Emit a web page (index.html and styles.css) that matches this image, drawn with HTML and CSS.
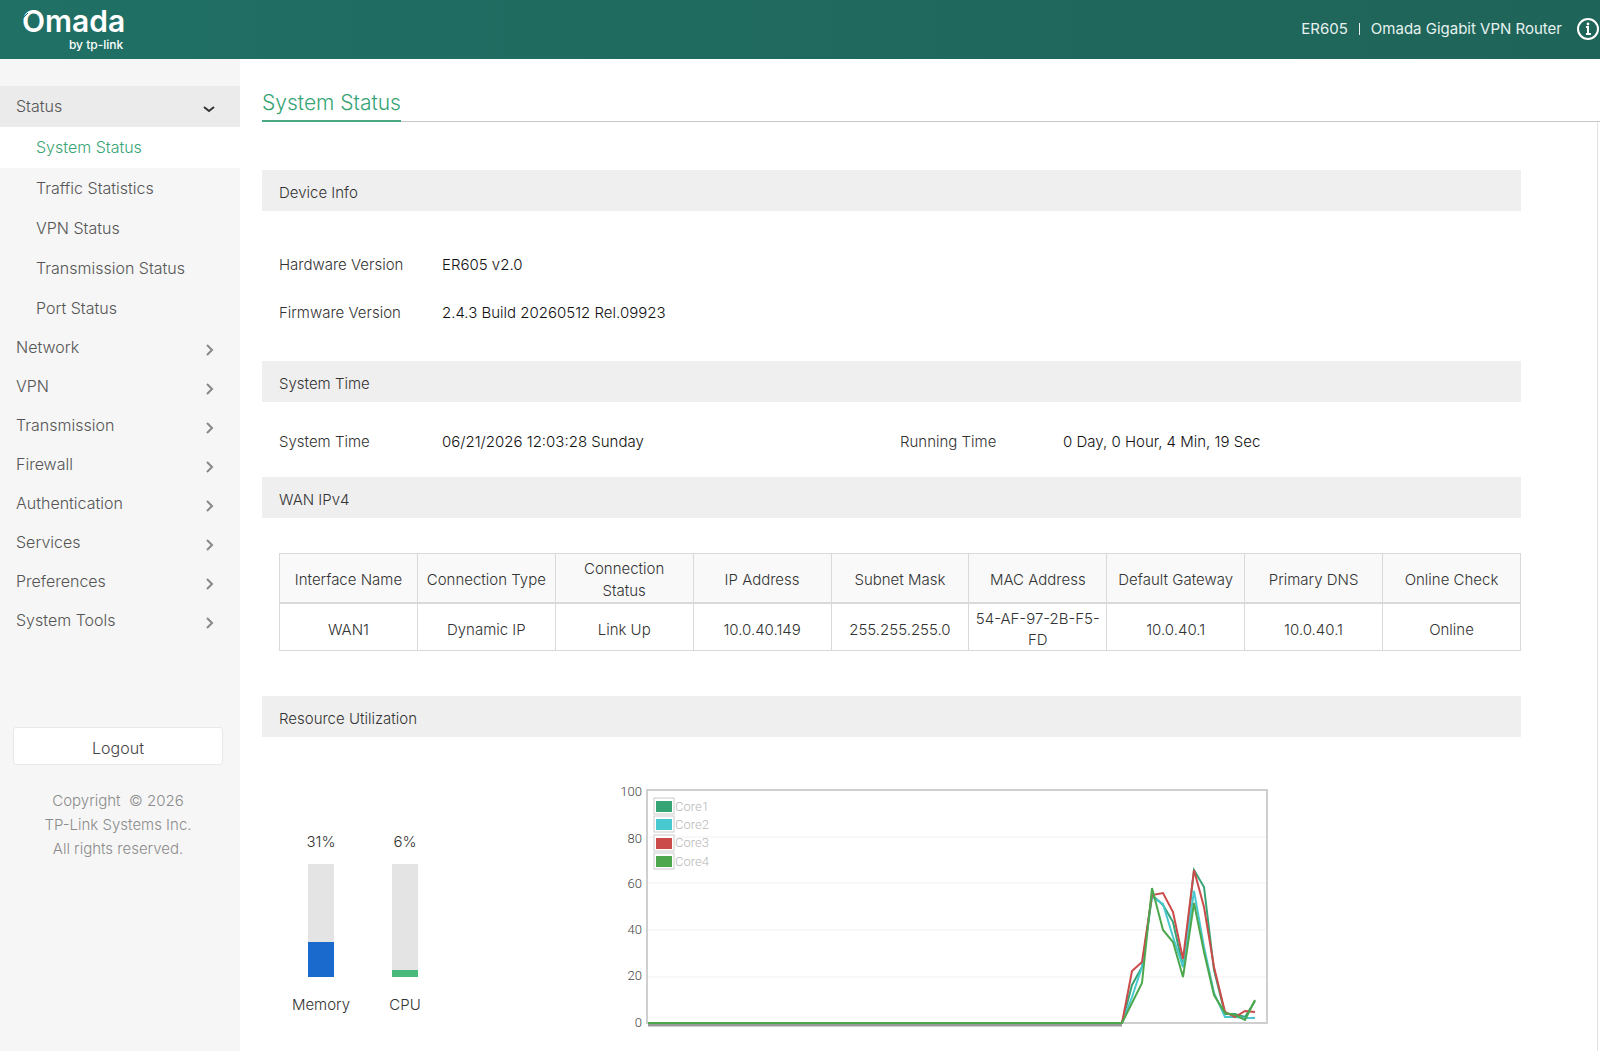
FILE: index.html
```html
<!DOCTYPE html>
<html lang="en">
<head>
  <meta charset="UTF-8" />
  <meta name="viewport" content="width=device-width,initial-scale=1.0" />
  <title>ER605 - System Status</title>
  <link rel="stylesheet" href="styles.css">
</head>
<body>
  <header class="topbar">
    <div class="logo">
      <span class="logo-name">Omada</span>
      <span class="logo-by">by tp-link</span>
      <svg class="logo-cut" width="8" height="10" viewBox="0 0 8 10"><path d="M0 8L6 2" /></svg>
    </div>
    <div class="device">
      <span>ER605</span>
      <span class="divider"></span>
      <span>Omada Gigabit VPN Router</span>
      <button type="button" class="info" aria-label="About">
        <svg width="24" height="24" viewBox="0 0 24 24">
          <circle cx="12" cy="12" r="10" fill="none" stroke="currentColor" stroke-width="2" />
          <path d="M10 10h2v7M10 17h5" fill="none" stroke="currentColor" stroke-width="2" />
          <circle cx="12" cy="7" r="1.4" fill="currentColor" />
        </svg>
      </button>
    </div>
  </header>

  <div class="layout">
    <aside class="sidebar">
      <nav>
        <a href="#status" class="item open">Status
          <svg width="12" height="12" viewBox="0 0 12 12"><path d="M1 4l5 4 5-4" /></svg>
        </a>
        <a href="#system-status" class="sub active">System Status</a>
        <a href="#traffic" class="sub">Traffic Statistics</a>
        <a href="#vpn-status" class="sub">VPN Status</a>
        <a href="#transmission-status" class="sub">Transmission Status</a>
        <a href="#port-status" class="sub">Port Status</a>
        <a href="#network" class="item">Network
          <svg width="12" height="12" viewBox="0 0 12 12"><path d="M4 1l5 5-5 5" /></svg>
        </a>
        <a href="#vpn" class="item">VPN
          <svg width="12" height="12" viewBox="0 0 12 12"><path d="M4 1l5 5-5 5" /></svg>
        </a>
        <a href="#transmission" class="item">Transmission
          <svg width="12" height="12" viewBox="0 0 12 12"><path d="M4 1l5 5-5 5" /></svg>
        </a>
        <a href="#firewall" class="item">Firewall
          <svg width="12" height="12" viewBox="0 0 12 12"><path d="M4 1l5 5-5 5" /></svg>
        </a>
        <a href="#authentication" class="item">Authentication
          <svg width="12" height="12" viewBox="0 0 12 12"><path d="M4 1l5 5-5 5" /></svg>
        </a>
        <a href="#services" class="item">Services
          <svg width="12" height="12" viewBox="0 0 12 12"><path d="M4 1l5 5-5 5" /></svg>
        </a>
        <a href="#preferences" class="item">Preferences
          <svg width="12" height="12" viewBox="0 0 12 12"><path d="M4 1l5 5-5 5" /></svg>
        </a>
        <a href="#system-tools" class="item">System Tools
          <svg width="12" height="12" viewBox="0 0 12 12"><path d="M4 1l5 5-5 5" /></svg>
        </a>
      </nav>
      <button type="button" class="logout">Logout</button>
      <p class="copyright">Copyright &nbsp;© 2026<br>TP-Link Systems Inc.<br>All rights reserved.</p>
    </aside>

    <main>
      <div class="tabs"><h1>System Status</h1></div>

      <div class="panel">
        <section>
          <h2>Device Info</h2>
          <dl class="info-list device-info">
            <div><dt>Hardware Version</dt><dd>ER605 v2.0</dd></div>
            <div><dt>Firmware Version</dt><dd>2.4.3 Build 20260512 Rel.09923</dd></div>
          </dl>
        </section>

        <section>
          <h2>System Time</h2>
          <dl class="info-list time-info">
            <div><dt>System Time</dt><dd>06/21/2026 12:03:28 Sunday</dd></div>
            <div><dt>Running Time</dt><dd>0 Day, 0 Hour, 4 Min, 19 Sec</dd></div>
          </dl>
        </section>

        <section>
          <h2>WAN IPv4</h2>
          <table>
            <thead>
              <tr>
                <th>Interface Name</th>
                <th>Connection Type</th>
                <th>Connection<br>Status</th>
                <th>IP Address</th>
                <th>Subnet Mask</th>
                <th>MAC Address</th>
                <th>Default Gateway</th>
                <th>Primary DNS</th>
                <th>Online Check</th>
              </tr>
            </thead>
            <tbody>
              <tr>
                <td>WAN1</td>
                <td>Dynamic IP</td>
                <td>Link Up</td>
                <td>10.0.40.149</td>
                <td>255.255.255.0</td>
                <td>54-AF-97-2B-F5-<br>FD</td>
                <td>10.0.40.1</td>
                <td>10.0.40.1</td>
                <td>Online</td>
              </tr>
            </tbody>
          </table>
        </section>

        <section>
          <h2>Resource Utilization</h2>
          <div class="resources">
            <div class="meter">
              <span>31%</span>
              <div class="track"><div class="fill memory" style="height:31%"></div></div>
              <span>Memory</span>
            </div>
            <div class="meter">
              <span>6%</span>
              <div class="track"><div class="fill cpu" style="height:6%"></div></div>
              <span>CPU</span>
            </div>

            <svg class="chart" width="660" height="250" viewBox="0 0 660 250" role="img" aria-label="CPU usage per core">
              <!-- grid -->
              <g class="grid">
                <path d="M38 57H656M38 103H656M38 150H656M38 197H656" />
              </g>
              <rect class="frame" x="37" y="10" width="620" height="233" />
              <g class="axis" text-anchor="end">
                <text x="32" y="16">100</text>
                <text x="32" y="63">80</text>
                <text x="32" y="108">60</text>
                <text x="32" y="154">40</text>
                <text x="32" y="200">20</text>
                <text x="32" y="247">0</text>
              </g>
              <!-- legend -->
              <g class="legend">
                <rect x="44" y="18" width="20" height="16" /><rect class="c1" x="46" y="21" width="16" height="11" /><text x="65" y="31">Core1</text>
                <rect x="44" y="36" width="20" height="16" /><rect class="c2" x="46" y="39" width="16" height="11" /><text x="65" y="49">Core2</text>
                <rect x="44" y="55" width="20" height="16" /><rect class="c3" x="46" y="58" width="16" height="11" /><text x="65" y="67">Core3</text>
                <rect x="44" y="73" width="20" height="16" /><rect class="c4" x="46" y="76" width="16" height="11" /><text x="65" y="86">Core4</text>
              </g>
              <!-- series -->
              <path class="shadow" d="M38 245H512" />
              <g class="lines">
                <polyline class="l1" points="38,243 512,243 522,205 532,187 542,115 553,125 563,142 573,187 584,90 594,107 604,190 615,234 625,234 635,237 645,221" />
                <polyline class="l2" points="38,243 512,243 522,217 532,187 542,117 553,124 563,157 573,187 584,111 594,167 604,213 615,237 625,237 635,238 645,238" />
                <polyline class="l3" points="38,243 512,243 522,191 532,182 542,115 553,113 563,132 573,179 584,90 594,127 604,187 615,232 625,237 635,231 645,232" />
                <polyline class="l4" points="38,243 512,243 522,223 532,203 542,108 553,150 563,162 573,197 584,123 594,172 604,215 615,233 625,235 635,240 645,220" />
              </g>
            </svg>
          </div>
        </section>
      </div>
    </main>
  </div>
</body>
</html>
```

FILE: styles.css
```css
*{box-sizing:border-box;}
body{
  margin:0;
  min-height:100vh;
  display:flex;flex-direction:column;
  font-family:Inter,"Open Sans",sans-serif;
  font-size:15px;font-weight:300;line-height:22px;
  color:#333;
  background:#fff;
}
a{color:inherit;text-decoration:none;}
h1,h2,dl,dd,p{margin:0;font-weight:inherit;}

/* top bar */
.topbar{
  display:flex;justify-content:space-between;align-items:center;
  height:59px;padding-left:22px;
  background:linear-gradient(90deg,#207066,#1f685d 60%,#1f6459);
  color:#e6f2ef;
}
.logo{
  position:relative;
  display:flex;flex-direction:column;align-items:flex-end;gap:2px;
  padding-bottom:4px;color:#fff;
}
.logo-name{font-size:30px;font-weight:600;line-height:32px;}
.logo-by{padding-right:2px;font-size:12px;font-weight:500;line-height:12px;}
.logo-cut{position:absolute;left:0;top:6px;stroke:#207066;}
.device{display:flex;align-items:center;padding-bottom:2px;font-weight:400;}
.divider{width:1px;height:12px;margin:0 11px;background:#e6f2ef;}
.info{
  display:flex;margin-left:14px;padding:0;
  border:none;background:none;color:#fff;cursor:pointer;
}

/* sidebar */
.layout{display:flex;flex:1;}
.sidebar{
  flex:0 0 240px;padding-top:27px;
  background:#f6f6f6;color:#555;
}
nav{font-size:16px;}
.item,.sub{display:flex;align-items:center;height:39px;padding:0 25px 2px 16px;}
.item{justify-content:space-between;}
.item svg{margin-top:6px;fill:none;stroke:#888;stroke-width:2;}
.sub{height:40px;padding:0 0 0 36px;}
.item.open{height:41px;background:#ebebeb;}
.item.open svg{stroke:#333;}
.sub.active{height:41px;padding-bottom:2px;background:#fff;color:#36a474;}
.logout{
  display:block;width:210px;height:38px;margin:87px 0 24px 13px;padding-top:4px;
  border:1px solid #e8e8e8;border-radius:3px;background:#fff;
  font:inherit;font-size:16px;color:#444;cursor:pointer;
}
.copyright{width:236px;line-height:24px;text-align:center;color:#8c8c8c;}

/* content */
main{flex:1;min-width:0;display:flex;flex-direction:column;}
.tabs{display:flex;padding:30px 0 0 22px;}
.tabs::after{content:"";flex:1;border-bottom:1px solid #c8c8c8;}
h1{
  padding-bottom:3px;border-bottom:2px solid #4aa881;
  font-size:21px;line-height:28px;color:#36a474;
}
.panel{
  flex:1;margin-right:2px;padding:48px 76px 0 22px;
  border-right:1px solid #e2e2e2;
}
h2{
  height:41px;padding:12px 17px 0;
  background:#efefef;font-size:15px;line-height:22px;
}
.info-list{padding-left:17px;}
.info-list div{display:flex;align-items:center;height:48px;}
dt{width:163px;}
dd{color:#111;}
.device-info{padding-top:30px;padding-bottom:24px;}
.time-info{
  display:grid;grid-template-columns:1fr 1fr;
  padding-top:16px;padding-bottom:11px;
}

table{
  width:calc(100% - 17px);margin:35px 0 45px 17px;
  border-collapse:collapse;table-layout:fixed;
}
th,td{
  padding:4px 0 0;border:1px solid #d9d9d9;
  text-align:center;font-weight:300;
}
th{background:#f9f9f9;border-bottom-width:2px;}
td{line-height:21px;}

/* resource utilization */
.resources{display:flex;padding:43px 0 0 17px;}
.meter{
  display:flex;flex-direction:column;align-items:center;
  width:84px;padding-top:51px;
}
.track{
  display:flex;align-items:flex-end;
  width:26px;height:113px;margin:11px 0 17px;
  background:#e4e4e5;
}
.fill{width:100%;}
.memory{background:#1a69cc;}
.cpu{background:#49ba7c;}

.chart{margin-left:163px;}
.chart text{font-family:Roboto,sans-serif;font-size:13px;font-weight:300;}
.axis text{fill:#444;}
.grid{stroke:#f1f1f1;}
.frame{fill:none;stroke:#cfcfcf;stroke-width:2;}
.legend rect{fill:#fff;stroke:#ccc;}
.legend text{fill:#b8b8b8;}
.legend .c1{fill:#36a474;stroke:none;}
.legend .c2{fill:#48c8cf;stroke:none;}
.legend .c3{fill:#cb4b4b;stroke:none;}
.legend .c4{fill:#4da74d;stroke:none;}
.lines{fill:none;stroke-width:2;}
.l1{stroke:#36a474;}
.l2{stroke:#48c8cf;}
.l3{stroke:#cb4b4b;}
.l4{stroke:#4da74d;}
.shadow{stroke:#999;stroke-width:3;}
```
